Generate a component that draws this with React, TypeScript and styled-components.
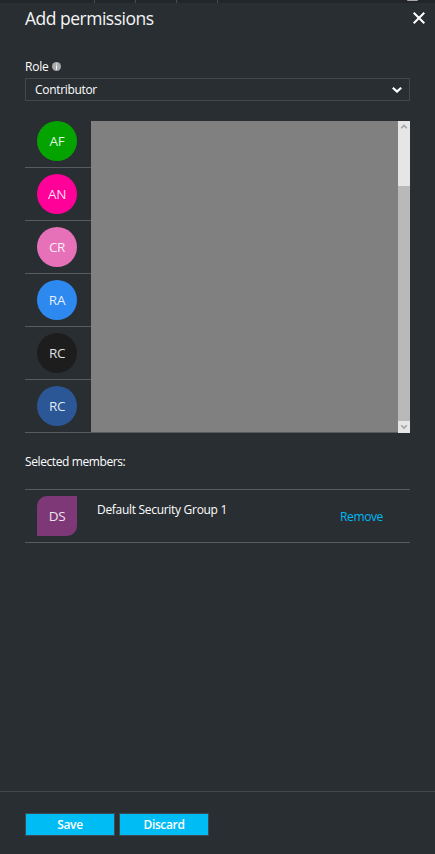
import React from "react";
import styled, { createGlobalStyle } from "styled-components";

const GlobalStyle = createGlobalStyle`
  * { box-sizing: border-box; }
  body {
    margin: 0;
    background: #292e32;
    color: #fff;
    font: 12px/16px "Open Sans", "Noto Sans", sans-serif;
  }
  button { font: inherit; color: inherit; border: 0; padding: 0; background: none; cursor: pointer; }
`;

const Blade = styled.main`
  width: 435px;
  height: 854px;
  display: flex;
  flex-direction: column;
  overflow: hidden;
  background: #292e32;
`;

const TopStrip = styled.div`
  height: 3px;
  flex: none;
  display: flex;
  padding-left: 54px;
  background: #22262a;
`;

const StripCell = styled.div`
  width: 41px;
  border-right: 1px solid #484d51;
`;

const AccountEdge = styled.div`
  width: 11px;
  height: 1px;
  margin-left: 189px;
  border-radius: 0 0 5px 5px;
  background: #a5a7a9;
`;

const Header = styled.header`
  height: 55px;
  flex: none;
  display: flex;
  justify-content: space-between;
  align-items: flex-start;
  padding: 3px 10px 0 25px;
`;

const Title = styled.h1`
  margin: 0;
  color: #f4f5f5;
  font-size: 17.5px;
  line-height: 24px;
  font-weight: 400;
  letter-spacing: -0.5px;
`;

const CloseButton = styled.button`
  width: 12px;
  height: 12px;
  margin-top: 6px;
  svg { display: block; }
`;

const Content = styled.section`
  flex: 1;
  padding: 0 25px;
`;

const Label = styled.div`
  height: 20px;
  display: flex;
  align-items: center;
  gap: 3px;
  letter-spacing: -0.2px;
  padding-bottom: 2px;
  svg { display: block; margin: -1px 0 0 0; }
`;

const Select = styled.button`
  width: 100%;
  height: 23px;
  display: flex;
  align-items: center;
  justify-content: space-between;
  padding: 0 7px 0 9px;
  border: 1px solid #43484c;
  letter-spacing: -0.32px;
  svg { display: block; }
`;

const List = styled.div`
  height: 312px;
  margin-top: 20px;
  display: flex;
  overflow: hidden;
`;

const ListBody = styled.div`
  flex: 1;
  display: flex;
  border-bottom: 1px solid #575b5e;
`;

const AvatarColumn = styled.div`
  width: 66px;
  margin-top: -6px;
`;

const AvatarRow = styled.div`
  height: 53px;
  padding: 6px 0 0 12px;
  border-bottom: 1px solid #575b5e;
  &:last-child { height: 52px; border-bottom: 0; }
`;

const Avatar = styled.div<{ $color: string; $group?: boolean }>`
  width: 40px;
  height: 40px;
  flex: none;
  display: grid;
  place-items: center;
  border-radius: ${({ $group }) => ($group ? "10px 0 10px 0" : "50%")};
  background: ${({ $color }) => $color};
  color: rgba(255, 255, 255, 0.88);
  font-size: 13.5px;
  line-height: 18px;
  letter-spacing: -0.3px;
`;

const Details = styled.div`
  flex: 1;
  background: #808080;
`;

const ScrollBar = styled.div`
  width: 12px;
  display: flex;
  flex-direction: column;
  background: #b9b9b9;
`;

const ScrollPart = styled.div<{ $height: number }>`
  height: ${({ $height }) => $height}px;
  background: #e6e6e6;
  svg { display: block; }
`;

const ScrollTrack = styled.div`
  flex: 1;
`;

const SelectedLabel = styled.div`
  margin-top: 21px;
  height: 35px;
  letter-spacing: -0.4px;
`;

const Member = styled.div`
  height: 54px;
  display: flex;
  padding: 6px 27px 0 12px;
  border-top: 1px solid #575b5e;
  border-bottom: 1px solid #575b5e;
`;

const MemberName = styled.div`
  flex: 1;
  margin: 6px 0 0 20px;
  letter-spacing: -0.3px;
`;

const RemoveButton = styled.button`
  height: 16px;
  margin-top: 13px;
  color: #00b9f2;
  letter-spacing: -0.37px;
`;

const Footer = styled.footer`
  height: 63px;
  flex: none;
  display: flex;
  gap: 4px;
  padding: 21px 25px 0;
  border-top: 1px solid #43484c;
`;

const ActionButton = styled.button`
  && {
    width: 90px;
    height: 23px;
    border: 1px solid #3d4a51;
    background: #00bcf5;
    font-weight: 600;
    line-height: 21px;
    letter-spacing: -0.35px;
  }
`;

const people = [
  { initials: "AF", color: "#05a300" },
  { initials: "AN", color: "#ff0098" },
  { initials: "CR", color: "#e671b8" },
  { initials: "RA", color: "#2d89ef" },
  { initials: "RC", color: "#1d1d1d" },
  { initials: "RC", color: "#2b5797" },
];

const Arrow = ({ down = false }: { down?: boolean }) => (
  <svg width="12" height="12" viewBox="0 0 12 12" fill="none" stroke="#a3a3a3" strokeWidth="1.6">
    <path d={down ? "M3.2 4.3 6 7.1l2.8-2.8" : "M3.2 7.3 6 4.5l2.8 2.8"} />
  </svg>
);

export default function App() {
  return (
    <>
      <GlobalStyle />
      <Blade>
        <TopStrip>
          <StripCell />
          <StripCell />
          <StripCell />
          <StripCell />
          <AccountEdge />
        </TopStrip>
        <Header>
          <Title>Add permissions</Title>
          <CloseButton aria-label="Close">
            <svg width="12" height="12" viewBox="0 0 12 12" stroke="#fff" strokeWidth="2">
              <path d="m.7.7 10.6 10.6M11.3.7.7 11.3" />
            </svg>
          </CloseButton>
        </Header>
        <Content>
          <Label>
            Role
            <svg width="9" height="9" viewBox="0 0 9 9">
              <circle cx="4.5" cy="4.5" r="4.5" fill="#a9abad" />
              <path d="M4 1.5h1v1H4zM4 3.5h1v4H4z" fill="#fff" />
            </svg>
          </Label>
          <Select>
            Contributor
            <svg width="10" height="6" viewBox="0 0 10 6" fill="none" stroke="#fff" strokeWidth="2.2">
              <path d="M.8.8 5 4.6 9.2.8" />
            </svg>
          </Select>
          <List>
            <ListBody>
              <AvatarColumn>
                {people.map((person, index) => (
                  <AvatarRow key={index}>
                    <Avatar $color={person.color}>{person.initials}</Avatar>
                  </AvatarRow>
                ))}
              </AvatarColumn>
              <Details />
            </ListBody>
            <ScrollBar>
              <ScrollPart $height={65}><Arrow /></ScrollPart>
              <ScrollTrack />
              <ScrollPart $height={12}><Arrow down /></ScrollPart>
            </ScrollBar>
          </List>
          <SelectedLabel>Selected members:</SelectedLabel>
          <Member>
            <Avatar $color="#7e3878" $group>DS</Avatar>
            <MemberName>Default Security Group 1</MemberName>
            <RemoveButton>Remove</RemoveButton>
          </Member>
        </Content>
        <Footer>
          <ActionButton>Save</ActionButton>
          <ActionButton>Discard</ActionButton>
        </Footer>
      </Blade>
    </>
  );
}
